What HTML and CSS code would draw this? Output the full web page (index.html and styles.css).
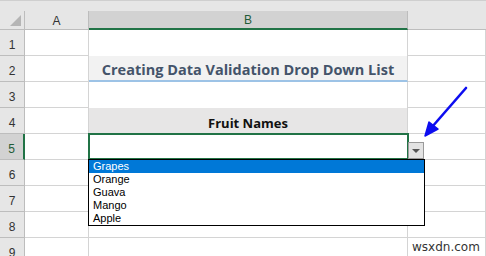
FILE: index.html
```html
<!DOCTYPE html>
<html>
<head>
<meta charset="utf-8">
<link rel="stylesheet" href="styles.css">
</head>
<body>
<div class="window">
  <div class="topbar"></div>
  <div class="sheet">
    <div class="corner"><span class="tri"></span></div>
    <div class="colhead">A</div>
    <div class="colhead sel">B</div>
    <div class="colhead last"></div>

    <div class="rowhead">1</div>
    <div class="cell"></div>
    <div class="cell b-fill"></div>
    <div class="cell"></div>

    <div class="rowhead">2</div>
    <div class="cell"></div>
    <div class="cell b-title">Creating Data Validation Drop Down List</div>
    <div class="cell"></div>

    <div class="rowhead">3</div>
    <div class="cell"></div>
    <div class="cell b-fill"></div>
    <div class="cell"></div>

    <div class="rowhead">4</div>
    <div class="cell"></div>
    <div class="cell b-head">Fruit Names</div>
    <div class="cell"></div>

    <div class="rowhead sel">5</div>
    <div class="cell"></div>
    <div class="cell b-active">
      <div class="dd-btn"><span class="dd-tri"></span></div>
      <ul class="dd-list">
        <li class="hl">Grapes</li>
        <li>Orange</li>
        <li>Guava</li>
        <li>Mango</li>
        <li>Apple</li>
      </ul>
    </div>
    <div class="cell"></div>

    <div class="rowhead">6</div>
    <div class="cell"></div>
    <div class="cell"></div>
    <div class="cell"></div>

    <div class="rowhead">7</div>
    <div class="cell"></div>
    <div class="cell"></div>
    <div class="cell"></div>

    <div class="rowhead">8</div>
    <div class="cell"></div>
    <div class="cell"></div>
    <div class="cell"></div>

    <div class="rowhead">9</div>
    <div class="cell"></div>
    <div class="cell"></div>
    <div class="cell wm">wsxdn.com</div>
  </div>
  <svg class="pointer" width="60" height="60" viewBox="0 0 60 60">
    <line x1="48" y1="3" x2="14" y2="42" stroke="#0d0df0" stroke-width="2.6" stroke-linecap="round"/>
    <polygon points="7,51 11,37 20,44" fill="#0d0df0" stroke="#0d0df0" stroke-width="1.5" stroke-linejoin="round"/>
  </svg>
</div>
</body>
</html>
```
FILE: styles.css
```css
* { box-sizing: border-box; }
html, body { margin: 0; padding: 0; background: #fff; }
body { width: 486px; height: 256px; overflow: hidden; font-family: "Open Sans", "Liberation Sans", sans-serif; }
.window { position: relative; width: 486px; height: 256px; overflow: hidden; }
.topbar { height: 11px; background: #e6e6e6; border-top: 1px solid #cfcfcf; }
.sheet {
  display: grid;
  grid-template-columns: 25px 64px 319px 78px;
  grid-template-rows: 19px repeat(9, 26px);
}
.corner { position: relative; background: #e6e6e6; border-right: 1px solid #bdbdbd; border-bottom: 1px solid #bdbdbd; }
.tri { position: absolute; right: 3px; bottom: 3px; width: 0; height: 0; border-left: 11px solid transparent; border-bottom: 11px solid #b5b5b5; }
.colhead {
  background: #e6e6e6; border-right: 1px solid #bdbdbd; border-bottom: 1px solid #bdbdbd;
  display: flex; align-items: center; justify-content: center;
  font-family: "Liberation Sans", sans-serif; font-size: 12px; color: #333; padding-top: 1px;
}
.colhead.sel { background: #d2d2d2; color: #1f5c38; border-bottom: 2px solid #217346; }
.colhead.last { border-right: none; }
.rowhead {
  background: #e6e6e6; border-right: 1px solid #bdbdbd; border-bottom: 1px solid #bdbdbd;
  display: flex; align-items: center; justify-content: center;
  font-family: "Liberation Sans", sans-serif; font-size: 12px; color: #333; padding-top: 5px;
}
.rowhead.sel { background: #d2d2d2; color: #1f5c38; border-right: 2px solid #217346; }
.cell { border-right: 1px solid #d4d4d4; border-bottom: 1px solid #d4d4d4; background: #fff; }
.b-fill { border-bottom: none; }
.b-title {
  background: #f2f2f2; border-bottom: 2px solid #9dc3e6;
  display: flex; align-items: center; justify-content: center;
  font-family: "Open Sans", sans-serif; font-weight: 700; font-size: 14.5px; color: #44546a;
  padding-top: 2px;
}
.b-head {
  background: #e7e6e6; border-bottom: none;
  display: flex; align-items: center; justify-content: center;
  font-family: "Open Sans", sans-serif; font-weight: 700; font-size: 13px; color: #111;
  padding-top: 3px;
}
.b-active { position: relative; border: none; }
.b-active::before {
  content: ""; position: absolute; left: -1px; top: -1px; right: -1px; bottom: 0;
  border: 2px solid #217346;
}
.dd-btn {
  position: absolute; left: 319px; top: 8px; width: 16px; height: 17px;
  background: #e3e3e3; border: 1px solid #9a9a9a;
  display: flex; align-items: center; justify-content: center; z-index: 2;
}
.dd-tri { width: 0; height: 0; border-left: 4px solid transparent; border-right: 4px solid transparent; border-top: 4px solid #555; }
.dd-list {
  position: absolute; left: -1px; top: 25px; width: 337px; margin: 0; padding: 0;
  list-style: none; background: #fff; border: 1px solid #000; z-index: 3;
  font-family: "Liberation Sans", sans-serif; font-size: 11px; color: #000;
}
.dd-list li { height: 13px; line-height: 13px; padding-left: 4px; }
.dd-list li.hl { background: #0078d7; color: #fff; }
.wm {
  display: flex; align-items: flex-start; padding-left: 4px; padding-top: 2px;
  font-family: "DejaVu Sans", sans-serif; font-size: 12px; color: #333;
}
.pointer { position: absolute; left: 418px; top: 85px; }
```
